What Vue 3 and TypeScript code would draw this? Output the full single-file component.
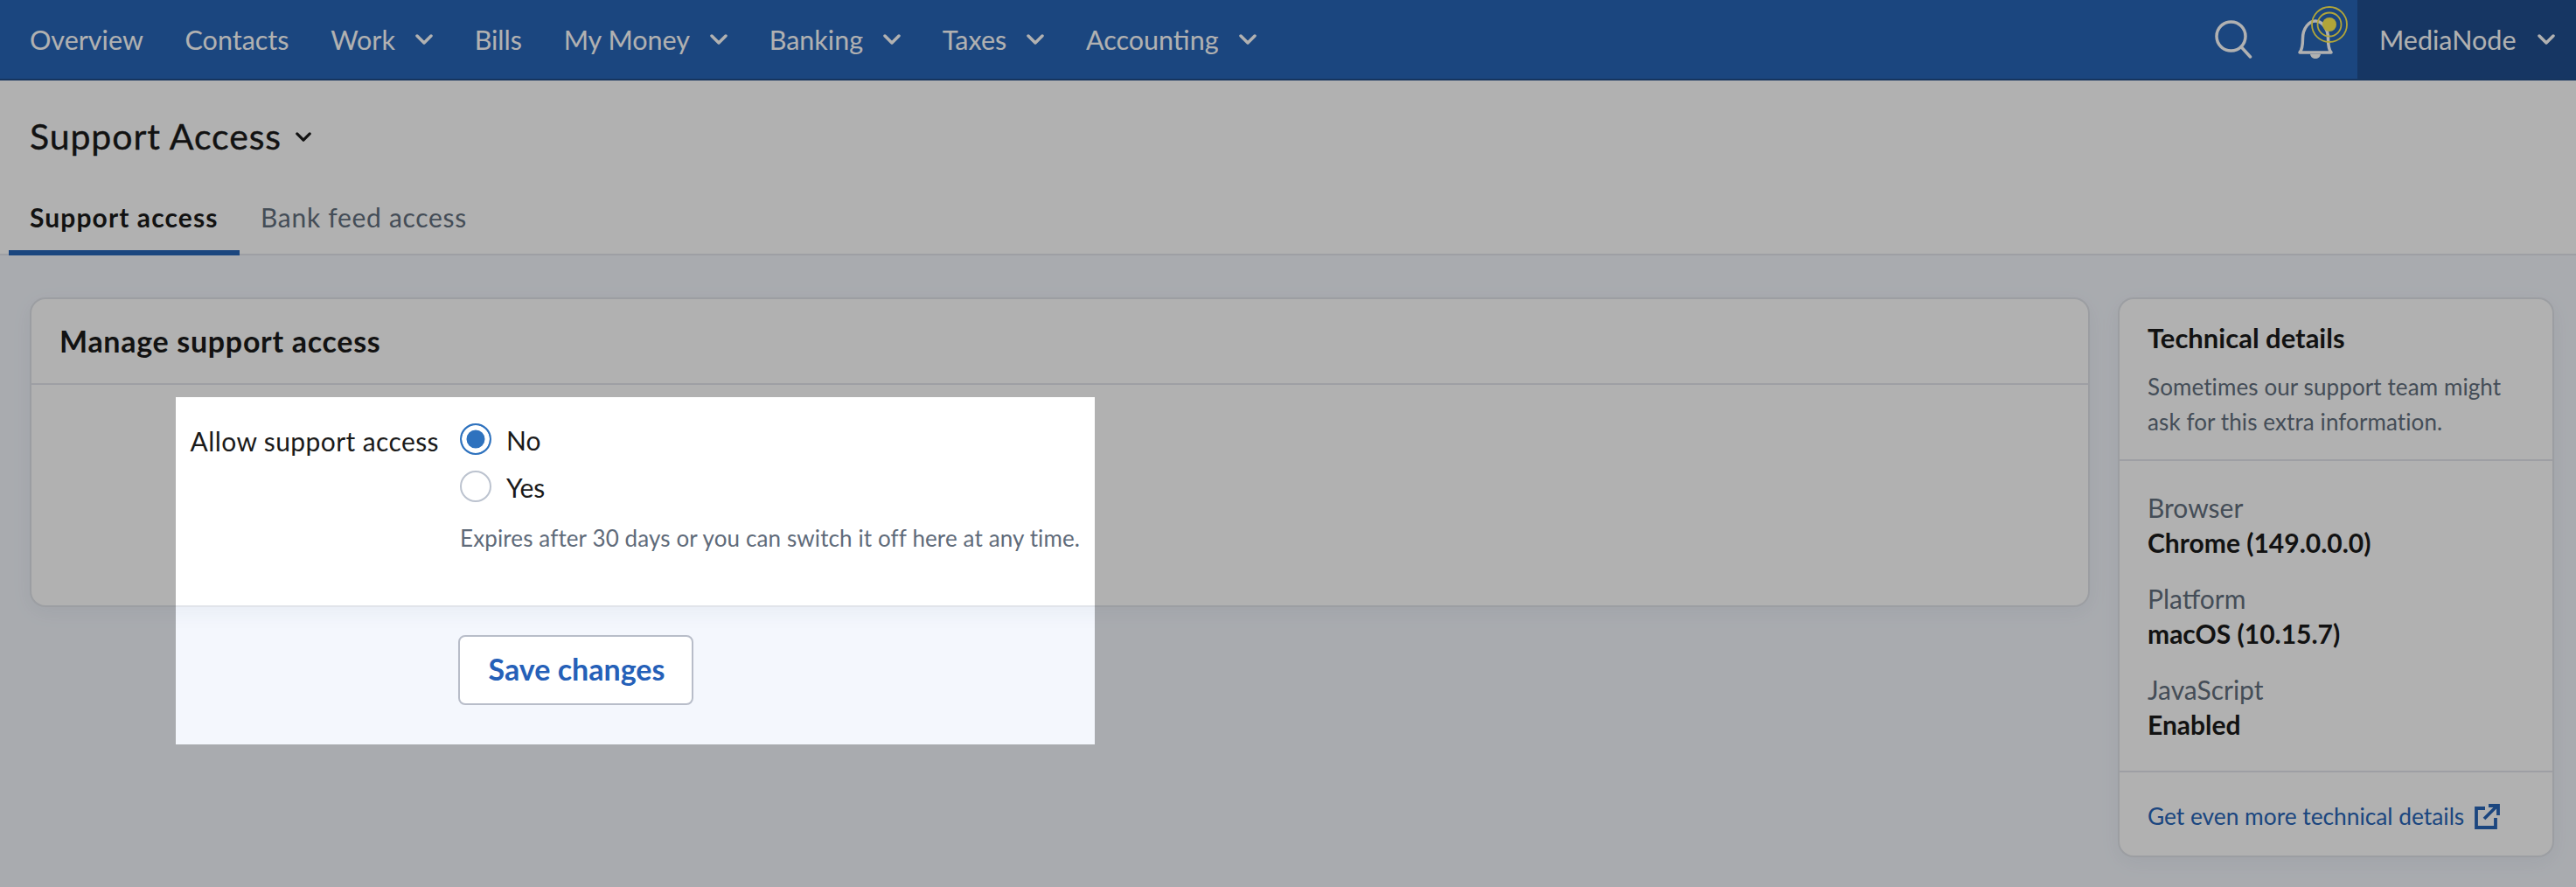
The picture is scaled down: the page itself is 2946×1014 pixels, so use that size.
<script setup lang="ts">
const navItems: Array<{ label: string; menu?: boolean }> = [
  { label: 'Overview' },
  { label: 'Contacts' },
  { label: 'Work', menu: true },
  { label: 'Bills' },
  { label: 'My Money', menu: true },
  { label: 'Banking', menu: true },
  { label: 'Taxes', menu: true },
  { label: 'Accounting', menu: true },
];

const details = [
  { label: 'Browser', value: 'Chrome (149.0.0.0)' },
  { label: 'Platform', value: 'macOS (10.15.7)' },
  { label: 'JavaScript', value: 'Enabled' },
];
</script>

<template>
  <div class="page">
    <nav class="topbar">
      <ul class="nav-list">
        <li v-for="item in navItems" :key="item.label" class="nav-item">
          <span>{{ item.label }}</span>
          <svg v-if="item.menu" class="chevron" viewBox="0 0 20 12"><path d="M2 2l8 8 8-8" /></svg>
        </li>
      </ul>
      <div class="nav-tools">
        <svg class="search" viewBox="0 0 44 44">
          <circle cx="18.5" cy="18.5" r="16.5" />
          <path d="M30.5 31l10 11" />
        </svg>
        <div class="bell-wrap">
          <svg class="bell" viewBox="0 0 42 46">
            <path d="M3 38h36c-3-3.500-3.500-8-3.500-16C35.500 10 28 2 21 2S6.500 10 6.500 22c0 8-.5 12.500-3.500 16z" />
            <path class="clapper" d="M15 40h12c-.5 3-3 5-6 5s-5.500-2-6-5z" />
          </svg>
          <svg class="pulse" viewBox="0 0 44 44">
            <circle cx="22" cy="22" r="20" />
            <circle cx="22" cy="22" r="13.500" />
            <circle class="pulse-dot" cx="22" cy="22" r="8" />
          </svg>
        </div>
        <div class="account">
          <span>MediaNode</span>
          <svg class="chevron" viewBox="0 0 20 12"><path d="M2 2l8 8 8-8" /></svg>
        </div>
      </div>
    </nav>

    <header class="page-head">
      <h1>Support Access <svg class="chevron small" viewBox="0 0 20 12"><path d="M2 2l8 8 8-8" /></svg></h1>
      <div class="tabs">
        <a class="tab active">Support access</a>
        <a class="tab">Bank feed access</a>
      </div>
    </header>

    <main class="content">
      <section class="form-column">
        <div class="card">
          <h2>Manage support access</h2>
          <div class="card-body">
            <div class="field-label">Allow support access</div>
            <div>
              <label class="radio-row"><span class="radio checked"></span><span class="radio-text">No</span></label>
              <label class="radio-row"><span class="radio"></span><span class="radio-text">Yes</span></label>
              <p class="help">Expires after 30 days or you can switch it off here at any time.</p>
            </div>
          </div>
        </div>
        <button class="save">Save changes</button>
      </section>

      <aside class="card side">
        <div class="side-block intro">
          <h3>Technical details</h3>
          <p>Sometimes our support team might ask for this extra information.</p>
        </div>
        <div class="side-block list">
          <div v-for="row in details" :key="row.label" class="detail">
            <div class="detail-label">{{ row.label }}</div>
            <div class="detail-value">{{ row.value }}</div>
          </div>
        </div>
        <a class="more">
          Get even more technical details
          <svg class="external" viewBox="0 0 30 30">
            <path d="M13 6H3v22h22V17" />
            <path d="M12 18L27 3M17 3h11v11" />
          </svg>
        </a>
      </aside>
    </main>

    <div class="spotlight"></div>
  </div>
</template>

<style scoped>
.page {
  position: relative;
  min-height: 1014px;
  overflow: hidden;
  background: #f4f7fd;
  color: #1a1a1a;
  font-family: Lato, "Noto Sans", sans-serif;
}

.topbar {
  display: flex;
  justify-content: space-between;
  height: 92px;
  box-sizing: border-box;
  background: #2865b8;
  border-bottom: 2px solid #214d89;
  color: #fff;
  font-size: 30.500px;
}
.nav-list {
  display: flex;
  gap: 47.700px;
  margin: 0;
  padding: 0 0 0 34px;
  list-style: none;
}
.nav-item {
  display: flex;
  align-items: center;
  gap: 23px;
}
.chevron {
  width: 20px;
  height: 12px;
  fill: none;
  stroke: currentColor;
  stroke-width: 3.5;
  stroke-linecap: round;
  stroke-linejoin: round;
}
.nav-tools {
  display: flex;
  align-items: center;
}
.search {
  width: 44px;
  height: 44px;
  margin-right: 50px;
  fill: none;
  stroke: currentColor;
  stroke-width: 3.5;
  stroke-linecap: round;
}
.bell-wrap {
  position: relative;
  width: 42px;
  height: 46px;
  margin-right: 27px;
}
.bell {
  display: block;
  width: 42px;
  height: 46px;
  fill: none;
  stroke: currentColor;
  stroke-width: 3.500;
  stroke-linejoin: round;
}
.clapper {
  fill: currentColor;
  stroke: none;
}
.pulse {
  position: absolute;
  top: -16px;
  left: 15px;
  width: 44px;
  height: 44px;
  fill: none;
  stroke: #ffee52;
  stroke-width: 1.800;
}
.pulse-dot {
  fill: #ffee52;
  stroke: none;
}
.account {
  display: flex;
  align-items: center;
  gap: 24px;
  width: 250px;
  height: 90px;
  box-sizing: border-box;
  padding-left: 25px;
  background: #214f8f;
}

.page-head {
  height: 200px;
  box-sizing: border-box;
  padding-top: 39px;
  background: #fff;
  border-bottom: 2px solid #e4e6ec;
}
h1 {
  display: flex;
  align-items: center;
  gap: 16px;
  height: 50px;
  margin: 0 0 47px 34px;
  font-size: 41px;
  font-weight: 400;
  letter-spacing: 0.900px;
  line-height: 50px;
  -webkit-text-stroke: 0.400px currentColor;
}
.small {
  width: 18px;
  height: 11px;
}
.tabs {
  display: flex;
  margin-left: 10px;
}
.tab {
  height: 64px;
  box-sizing: border-box;
  padding: 0 24px;
  color: #636f7e;
  font-size: 30px;
  letter-spacing: 0.700px;
  line-height: 40px;
}
.tab.active {
  width: 264px;
  border-bottom: 6px solid #2865b8;
  color: #1a1a1a;
  font-weight: 700;
  letter-spacing: 1.100px;
  white-space: nowrap;
}

.content {
  display: grid;
  grid-template-columns: 2356px 499px;
  gap: 32px;
  padding: 48px 25px 0 34px;
}
.card {
  box-sizing: border-box;
  background: #fff;
  border: 2px solid #e1e4ea;
  border-radius: 18px;
  box-shadow: 0 6px 24px rgba(40, 60, 100, 0.06);
}
h2 {
  height: 98px;
  box-sizing: border-box;
  margin: 0;
  padding: 28px 32px 0;
  border-bottom: 2px solid #e4e6ec;
  font-size: 34px;
  font-weight: 700;
  letter-spacing: 0.700px;
  line-height: 40px;
}
.card-body {
  display: grid;
  grid-template-columns: 466px 1fr;
  gap: 24px;
  height: 252px;
  box-sizing: border-box;
  padding-top: 35px;
}
.field-label {
  padding-top: 9px;
  font-size: 30px;
  letter-spacing: 0.400px;
  line-height: 40px;
  text-align: right;
}
.radio-row {
  display: flex;
  align-items: center;
  gap: 17px;
  height: 54px;
  font-size: 30px;
}
.radio-text {
  padding-top: 2px;
}
.radio {
  width: 36px;
  height: 36px;
  box-sizing: border-box;
  border: 2px solid #bcc3cf;
  border-radius: 50%;
  background: #fff;
}
.radio.checked {
  border: 2.500px solid #2e72be;
  background: #2e72be;
  box-shadow: inset 0 0 0 5.500px #fff;
}
.help {
  margin: 12px 0 0;
  color: #5f6b7a;
  font-size: 26px;
  letter-spacing: 0.120px;
  line-height: 40px;
}
.save {
  display: block;
  width: 269px;
  height: 80px;
  margin: 32px 0 0 490px;
  padding: 0 0 3px 2px;
  background: #fff;
  border: 2px solid #b8bdc9;
  border-radius: 8px;
  color: #2560b8;
  font-family: inherit;
  font-size: 34px;
  font-weight: 700;
}

.side {
  height: 640px;
}
.side-block {
  padding: 0 32px;
  border-bottom: 2px solid #e4e6ec;
}
.intro {
  height: 185px;
  box-sizing: border-box;
  padding-top: 24px;
}
h3 {
  margin: 0 0 16px;
  font-size: 31px;
  font-weight: 700;
  line-height: 40px;
}
.intro p {
  margin: 0;
  color: #636f7e;
  font-size: 26px;
  letter-spacing: 0.100px;
  line-height: 40px;
}
.list {
  height: 356px;
  box-sizing: border-box;
  padding-top: 33px;
}
.detail {
  margin-bottom: 24px;
  font-size: 30px;
  line-height: 40px;
}
.detail-label {
  color: #636f7e;
}
.detail-value {
  font-weight: 700;
}
.more {
  display: flex;
  align-items: center;
  gap: 11px;
  padding: 30px 32px 0;
  color: #2865b8;
  font-size: 26.300px;
  line-height: 40px;
}
.external {
  width: 30px;
  height: 30px;
  fill: none;
  stroke: currentColor;
  stroke-width: 3.800;
}

.spotlight {
  position: absolute;
  top: 454px;
  left: 201px;
  width: 1051px;
  height: 397px;
  box-shadow: 0 0 0 4000px rgba(0, 0, 0, 0.306);
}
</style>
